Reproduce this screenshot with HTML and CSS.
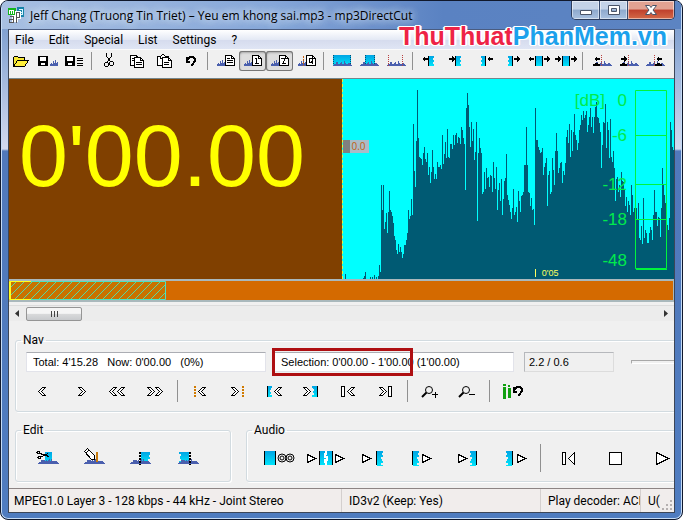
FILE: index.html
```html
<!DOCTYPE html>
<html lang="en">
<head>
<meta charset="utf-8">
<title>mp3DirectCut</title>
<link rel="stylesheet" href="styles.css">
</head>
<body>
<svg class="defs" aria-hidden="true">
  <defs>
    <linearGradient id="sky" x1="0" y1="0" x2="0" y2="1"><stop offset="0" stop-color="#00a4e4"/><stop offset="1" stop-color="#00e4fa"/></linearGradient>
    <pattern id="hatch" width="8" height="8" patternUnits="userSpaceOnUse"><path fill="none" stroke="#58d8a0" d="M-1 9L9-1M-1 1L1-1M7 9L9 7"/></pattern>
    <path id="wave" fill="#4a5fae" d="M0 6V4h1V3h1v1h1V1h1v2h1V0h1v3h1V2h1v4z"/>
    <path id="wide-wave" fill="#4a5fae" d="M0 5V4h1V3h2V1h2v2h2V2h1V1h1v2h2V0h1v2h1v1h2V2h2v1h1v1h1v1z"/>
    <g id="disk"><path fill="#000" d="M0 0h10v10H0z"/><path fill="#fff" d="M2 1h6v4H2zM3 7h4v2H3z"/></g>
    <g id="page"><path fill="#fff" stroke="#000" d="M.5.5h6l3 3v7h-9z"/><path fill="none" stroke="#000" d="M6.500.5v3h3"/></g>
    <path id="left" d="M0 3l3-3v2h3v2H3v2z"/>
    <path id="right" d="M6 3L3 0v2H0v2h3v2z"/>
    <path id="chev-l" fill="#fff" stroke="#000" d="M4.500.5l-4 4 4 4h3l-4-4 4-4z"/>
    <path id="chev-r" fill="#fff" stroke="#000" d="M.5.5h3l4 4-4 4h-3l4-4z"/>
    <path id="tri" fill="#fff" stroke="#000" d="M.5.500v8l8-4z"/>
    <path id="torn" fill="url(#sky)" d="M0 0h6v2H5v2h1v2H4v2h1v2h1v2H4v2h2v1H0z"/>
    <path id="undo" fill="none" stroke="#000" stroke-width="2" d="M1 6h4M2 1v5M2 5c1-5 8-5 8-1 0 2-2 4-4 6"/>
    <g id="lens" fill="none" stroke="#000"><circle cx="8" cy="4" r="3.500"/><path stroke-width="2" d="M5.500 6.500L1 11"/></g>
  </defs>
</svg>

<div class="window">
  <header class="titlebar">
    <svg class="logo" width="18" height="18" viewBox="0 0 18 18" shape-rendering="crispEdges" aria-hidden="true">
      <path fill="#12b51a" d="M0 1h8v7H0z"/><path fill="none" stroke="#fff" d="M1.500 7V3.500h2V7m0-3.500h2V7"/>
      <path fill="#1582a8" d="M9 0h7v10H9z"/><path fill="none" stroke="#d5f6ff" d="M11 2.500h3.500v5H11m1-2.500h2"/>
      <path fill="none" stroke="#fff" stroke-width="3" d="M5.500 14.500V8M8.500 15V5.500h3v5h-3"/>
      <path fill="none" stroke="#555" d="M8.500 16V5.500h3v5h-3M1.500 9.500h4v6h-4v-3h4"/>
    </svg>
    <h1>Jeff Chang (Truong Tin Triet) – Yeu em khong sai.mp3 - mp3DirectCut</h1>
    <div class="caption">
      <button aria-label="Minimize"><svg width="14" height="12"><path fill="#fff" stroke="#4a5468" d="M1.500 6.500h11v4h-11z"/></svg></button>
      <button aria-label="Maximize"><svg width="14" height="12"><path fill="#fff" stroke="#4a5468" fill-rule="evenodd" d="M1.500 1.500h11v9h-11zM4.500 4.500h5v3h-5z"/></svg></button>
      <button class="close" aria-label="Close"><svg width="14" height="12"><path fill="#fff" stroke="#4a5468" d="M1.500 1.500h4L7 3.500l1.500-2h4L9 6l3.500 4.500h-4L7 8.500l-1.500 2h-4L5 6z"/></svg></button>
    </div>
  </header>
  <div class="watermark"><span>ThuThuat</span><b>PhanMem.vn</b></div>

  <main class="client">
    <nav class="menu">
      <button>File</button><button>Edit</button><button>Special</button><button>List</button><button>Settings</button><button>?</button>
    </nav>

    <div class="toolbar" role="toolbar">
      <button aria-label="Open"><svg viewBox="0 0 27 20"><path fill="#f7e733" stroke="#000" d="M6.500 15.500v-9l1-1h3l1 1h6v3"/><path fill="#ffef3c" stroke="#000" d="M6.500 15.500l4-6h11l-4 6z"/></svg></button>
      <button aria-label="Save selection"><svg viewBox="0 0 27 20"><use href="#disk" x="4" y="5"/><use href="#wave" x="16" y="9"/></svg></button>
      <button aria-label="Save list"><svg viewBox="0 0 27 20"><use href="#disk" x="4" y="5"/><path stroke="#000" d="M16 7.500h6M16 9.500h6M16 12.500h6M16 14.500h6"/></svg></button>
      <i class="sep"></i>
      <button aria-label="Cut"><svg viewBox="0 0 27 20"><path fill="none" stroke="#000" d="M10.500 2v3l4 6M15.500 2v3l-4 6"/><circle cx="10.500" cy="13.500" r="2" fill="none" stroke="#000"/><circle cx="15.500" cy="12.500" r="2" fill="none" stroke="#000"/></svg></button>
      <button aria-label="Copy"><svg viewBox="0 0 27 20"><use href="#page" x="7" y="4"/><use href="#page" x="11" y="6"/><path stroke="#000" d="M9 7.500h2M9 9.500h2M13 11.500h6M13 13.500h6"/></svg></button>
      <button aria-label="Paste"><svg viewBox="0 0 27 20"><path fill="#fff" stroke="#000" d="M7.500 5.500h11v9h-11z"/><path fill="#fff" stroke="#000" d="M10.500 7.500v-2l2-2h1l2 2v2z"/><use href="#page" x="12" y="6"/><path stroke="#000" d="M14 11.500h5M14 13.500h5"/></svg></button>
      <button aria-label="Undo"><svg viewBox="0 0 27 20"><use href="#undo" x="8" y="5"/></svg></button>
      <i class="sep"></i>
      <button aria-label="Track list"><svg viewBox="0 0 27 20"><use href="#wave" x="5" y="9"/><use href="#page" x="13" y="4"/><path stroke="#000" d="M15 7.500h3M15 9.500h6M15 11.500h6"/></svg></button>
      <button class="on" aria-label="Buffer 1" aria-pressed="true"><svg viewBox="0 0 27 20"><use href="#wave" x="5" y="9"/><use href="#page" x="13" y="4"/><path fill="none" stroke="#000" d="M16 7.500h1.500V12M16 12.500h4"/></svg></button>
      <button class="on" aria-label="Buffer 2" aria-pressed="true"><svg viewBox="0 0 27 20"><use href="#wave" x="5" y="9"/><use href="#page" x="13" y="4"/><path fill="none" stroke="#000" d="M15 7.500h3.500v2l-2 3H20"/></svg></button>
      <button aria-label="Cue list"><svg viewBox="0 0 27 20"><use href="#wave" x="5" y="9"/><path stroke="#c86010" stroke-dasharray="2 1" d="M10.500 5v10"/><use href="#page" x="13" y="4"/><path fill="none" stroke="#000" d="M19.500 7.500h-3v4h3v-4M18 10.500l2 2"/></svg></button>
      <i class="sep"></i>
      <button aria-label="Select all"><svg viewBox="0 0 27 20"><path fill="url(#sky)" d="M5 4h18v11H5z"/><path stroke="#004c70" stroke-dasharray="1 1" d="M5.500 4v11M22.500 4v11"/><use href="#wide-wave" x="5" y="10"/></svg></button>
      <button aria-label="Select part"><svg viewBox="0 0 27 20"><path fill="url(#sky)" d="M10 4h10v11H10z"/><path stroke="#004c70" stroke-dasharray="1 1" d="M10.500 4v11M19.500 4v11"/><use href="#wide-wave" x="5" y="10"/></svg></button>
      <button aria-label="Deselect"><svg viewBox="0 0 27 20"><use href="#wide-wave" x="5" y="10"/><path stroke="#b84040" stroke-dasharray="1 1" d="M6.500 4v11M20.500 4v11"/></svg></button>
      <i class="sep"></i>
      <button aria-label="Start left"><svg viewBox="0 0 27 20"><use href="#left" x="5" y="5"/><path d="M11 5h1v10h-1z"/><path fill="url(#sky)" d="M12 5h5v2h-1v2h1v2h-1v2h1v2h-5z"/></svg></button>
      <button aria-label="Start right"><svg viewBox="0 0 27 20"><use href="#right" x="5" y="5"/><path d="M11 5h1v10h-1z"/><path fill="url(#sky)" d="M12 5h5v2h-1v2h1v2h-1v2h1v2h-5z"/></svg></button>
      <button aria-label="End left"><svg viewBox="0 0 27 20"><path fill="url(#sky)" d="M10 5h4v10h-4v-2h1v-2h-1V9h1V7h-1z"/><path d="M14 5h1v10h-1z"/><use href="#left" x="16" y="5"/></svg></button>
      <button aria-label="End right"><svg viewBox="0 0 27 20"><path fill="url(#sky)" d="M10 5h4v10h-4v-2h1v-2h-1V9h1V7h-1z"/><path d="M14 5h1v10h-1z"/><use href="#right" x="16" y="5"/></svg></button>
      <button aria-label="Expand"><svg viewBox="0 0 27 20"><use href="#left" x="3" y="5"/><path d="M10 5h8v10h-8z"/><path fill="url(#sky)" d="M11 5h6v10h-6z"/><use href="#right" x="19" y="5"/></svg></button>
      <button aria-label="Move selection"><svg viewBox="0 0 27 20"><use href="#right" x="3" y="5"/><path d="M10 5h8v10h-8z"/><path fill="url(#sky)" d="M11 5h6v10h-6z"/><use href="#right" x="19" y="5"/></svg></button>
      <i class="sep"></i>
      <button aria-label="Fade start"><svg viewBox="0 0 27 20"><use href="#wide-wave" x="6" y="10"/><use href="#left" x="7" y="5"/><path d="M6 15v-2h2v-1h3v1h2v2z"/><path stroke="#b84040" stroke-dasharray="1 1" d="M14.500 4v11"/></svg></button>
      <button aria-label="Fade middle"><svg viewBox="0 0 27 20"><use href="#wide-wave" x="6" y="10"/><use href="#right" x="7" y="5"/><path d="M6 15v-2h2v-1h3v1h2v2z"/><path stroke="#b84040" stroke-dasharray="1 1" d="M14.500 4v11"/></svg></button>
      <button aria-label="Fade end"><svg viewBox="0 0 27 20"><use href="#wide-wave" x="5" y="10"/><use href="#left" x="15" y="5"/><path d="M14 15v-2h2v-1h3v1h2v2z"/><path stroke="#b84040" stroke-dasharray="1 1" d="M13.500 4v11"/></svg></button>
    </div>

    <section class="display">
      <div class="clock">0'00.00</div>
      <div class="graph">
        <svg class="peaks" viewBox="0 0 332 200" preserveAspectRatio="none" aria-hidden="true"><path id="peak-path" fill="#005a73"/></svg>
        <span class="gain">0.0</span>
        <span class="tick">0'05</span>
        <svg class="meter" width="72" height="200" viewBox="0 0 72 200" aria-hidden="true">
          <path fill="none" stroke="#00f43c" d="M33.500 11.500h31v178h-31zM33 56.500h32M33 105.500h32M33 140.500h32M34 190.500h31"/>
          <text x="3" y="27" text-anchor="end">[dB]</text>
          <text x="25" y="27" text-anchor="end">0</text>
          <text x="25" y="62" text-anchor="end">-6</text>
          <text x="25" y="111" text-anchor="end">-12</text>
          <text x="25" y="146" text-anchor="end">-18</text>
          <text x="25" y="187" text-anchor="end">-48</text>
        </svg>
      </div>
    </section>
    <div class="overview">
      <svg class="range" width="157" height="19" aria-hidden="true">
        <rect width="157" height="19" fill="#c97200"/><rect width="157" height="19" fill="url(#hatch)"/>
        <path fill="none" stroke="#50e0c0" d="M1 .5h155.500v18H1"/>
        <path fill="none" stroke="#ffff20" d="M22 .5H.5v18H22M1.500 1v17"/>
      </svg>
    </div>
    <div class="scroller">
      <button aria-label="Scroll left"><svg width="6" height="8"><path d="M5 0v7L1 3.500z" fill="#333"/></svg></button>
      <div class="thumb"><i></i><i></i><i></i></div>
      <button class="end" aria-label="Scroll right"><svg width="6" height="8"><path d="M1 0v7l4-3.500z" fill="#333"/></svg></button>
    </div>

    <fieldset class="group nav">
      <legend>Nav</legend>
      <div class="fields">
        <input class="total" aria-label="Position" readonly value="Total: 4'15.28   Now: 0'00.00   (0%)">
        <div class="selection"><input aria-label="Selection" readonly value="Selection: 0'00.00 - 1'00.00 (1'00.00)"><div class="mark"></div></div>
        <input class="level" aria-label="Level" readonly value="2.2 / 0.6">
        <div class="track"></div>
      </div>
      <div class="buttons">
        <button aria-label="Back"><svg viewBox="0 0 37 22"><use href="#chev-l" x="12" y="7"/></svg></button>
        <button aria-label="Forward"><svg viewBox="0 0 37 22"><use href="#chev-r" x="15" y="7"/></svg></button>
        <button aria-label="Fast back"><svg viewBox="0 0 37 22"><use href="#chev-l" x="9" y="7"/><use href="#chev-l" x="17" y="7"/></svg></button>
        <button aria-label="Fast forward"><svg viewBox="0 0 37 22"><use href="#chev-r" x="10" y="7"/><use href="#chev-r" x="18" y="7"/></svg></button>
        <i class="sep"></i>
        <button aria-label="Previous cue"><svg viewBox="0 0 37 22"><path stroke="#d07a00" stroke-width="2" stroke-dasharray="2 1" d="M13 6v11"/><use href="#chev-l" x="16" y="7"/></svg></button>
        <button aria-label="Next cue"><svg viewBox="0 0 37 22"><use href="#chev-r" x="12" y="7"/><path stroke="#d07a00" stroke-width="2" stroke-dasharray="2 1" d="M24 6v11"/></svg></button>
        <button aria-label="Selection start"><svg viewBox="0 0 37 22"><path d="M11 6h1v11h-1z"/><path fill="url(#sky)" d="M12 6h4v2h-1v2h-1v2h1v2h-1v1h2v2h-4z"/><use href="#chev-l" x="18" y="7"/></svg></button>
        <button aria-label="Selection end"><svg viewBox="0 0 37 22"><use href="#chev-r" x="10" y="7"/><path fill="url(#sky)" d="M19 6h5v11h-5v-2h2v-2h-1v-2h1V9h-1V8h-1z"/><path d="M24 6h1v11h-1z"/></svg></button>
        <button aria-label="To start"><svg viewBox="0 0 37 22"><path fill="#fff" stroke="#000" d="M11.500 6.500h3v10h-3z"/><use href="#chev-l" x="17" y="7"/></svg></button>
        <button aria-label="To end"><svg viewBox="0 0 37 22"><use href="#chev-r" x="12" y="7"/><path fill="#fff" stroke="#000" d="M21.500 6.500h3v10h-3z"/></svg></button>
        <i class="sep"></i>
        <button aria-label="Zoom in"><svg class="smooth" viewBox="0 0 37 22"><use href="#lens" x="9" y="6"/><path stroke="#000" d="M20 14.500h6M23.500 12v6"/></svg></button>
        <button aria-label="Zoom out"><svg class="smooth" viewBox="0 0 37 22"><use href="#lens" x="9" y="6"/><path stroke="#000" d="M20 14.500h6"/></svg></button>
        <i class="sep"></i>
        <button aria-label="Reset meter"><svg viewBox="0 0 37 22"><path fill="#10a010" d="M9 4h3v2H9zM9 7h3v12H9zM14 5h2v2h-2zM14 8h3v10h-3z"/><use href="#undo" x="18" y="6"/></svg></button>
      </div>
    </fieldset>

    <div class="groups">
      <fieldset class="group edit">
        <legend>Edit</legend>
        <div class="buttons">
          <button aria-label="Cut out"><svg viewBox="0 0 47 24"><path fill="url(#sky)" d="M21 5h7v12h-7z"/><use href="#wide-wave" x="14" y="12"/><use href="#wide-wave" x="16" y="12"/><path fill="none" stroke="#000" d="M16 6.500l9 3M16 10.500l8-4"/><circle cx="14.500" cy="5.500" r="1.500" fill="#fff" stroke="#000"/><circle cx="15.500" cy="10.500" r="1.500" fill="#fff" stroke="#000"/></svg></button>
          <button aria-label="Edit cue"><svg viewBox="0 0 47 24"><use href="#wide-wave" x="13" y="12"/><use href="#wide-wave" x="15" y="12"/><path fill="#c87c10" d="M25 5h2v10h-2z"/><path fill="#fff" stroke="#000" d="M13.500 4.500l3-3 7 7v4h-3z"/><path stroke="#000" d="M15 6l3-3"/></svg></button>
          <button aria-label="Set begin"><svg viewBox="0 0 47 24"><path fill="url(#sky)" d="M23 5h9v3h-1v2h1v2h-2v3h2v1h-9z"/><use href="#wide-wave" x="12" y="12"/><use href="#wide-wave" x="14" y="12"/><path stroke="#000" stroke-width="2" stroke-dasharray="2 1" d="M22 5v13"/></svg></button>
          <button aria-label="Set end"><svg viewBox="0 0 47 24"><path fill="url(#sky)" d="M14 5h10v11H14v-2h2v-2h-1V9h1V7h-2z"/><use href="#wide-wave" x="13" y="12"/><use href="#wide-wave" x="15" y="12"/><path stroke="#000" stroke-width="2" stroke-dasharray="2 1" d="M25 5v13"/></svg></button>
        </div>
      </fieldset>
      <fieldset class="group audio">
        <legend>Audio</legend>
        <div class="buttons">
          <button aria-label="Play loop"><svg viewBox="0 0 47 24"><path d="M9 4h12v14H9z"/><path fill="url(#sky)" d="M10 4h10v14H10z"/><g class="smooth" fill="none" stroke="#000"><circle cx="27" cy="11" r="4"/><circle cx="35" cy="11" r="4"/><circle cx="27" cy="11" r="2"/><circle cx="35" cy="11" r="2"/></g></svg></button>
          <button aria-label="Play over cut"><svg viewBox="0 0 47 24"><use href="#tri" x="5" y="7"/><path d="M17 4h14v14H17z"/><path fill="url(#sky)" d="M18 4h12v14H18z"/><path fill="none" stroke="#fff" stroke-width="2" d="M24 4v3h-1v3h2v3h-2v2h1v3"/><use href="#tri" x="33" y="7"/></svg></button>
          <button aria-label="Play to start"><svg viewBox="0 0 47 24"><use href="#tri" x="13" y="7"/><path d="M27 4h1v14h-1z"/><use href="#torn" x="28" y="4"/></svg></button>
          <button aria-label="Play from start"><svg viewBox="0 0 47 24"><path d="M16 4h1v14h-1z"/><use href="#torn" x="17" y="4"/><use href="#tri" x="26" y="7"/></svg></button>
          <button aria-label="Play to end"><svg viewBox="0 0 47 24"><use href="#tri" x="15" y="7"/><use href="#torn" x="-33" y="4" transform="scale(-1 1)"/><path d="M33 4h1v14h-1z"/></svg></button>
          <button aria-label="Play from end"><svg viewBox="0 0 47 24"><use href="#torn" x="-22" y="4" transform="scale(-1 1)"/><path d="M22 4h1v14h-1z"/><use href="#tri" x="27" y="7"/></svg></button>
          <i class="sep"></i>
          <button aria-label="Rewind"><svg viewBox="0 0 47 24"><path fill="#fff" stroke="#000" d="M17.500 5.500h3v12h-3zM29.500 5.500v12l-6-6z"/></svg></button>
          <button aria-label="Stop"><svg viewBox="0 0 47 24"><path fill="#fff" stroke="#000" d="M17.500 5.500h12v12h-12z"/></svg></button>
          <button aria-label="Play"><svg viewBox="0 0 47 24"><path fill="#fff" stroke="#000" d="M17.500 5.500v12l12-6z"/></svg></button>
        </div>
      </fieldset>
    </div>

    <footer class="status">
      <span class="format">MPEG1.0 Layer 3 - 128 kbps - 44 kHz - Joint Stereo</span>
      <span class="tag">ID3v2 (Keep: Yes)</span>
      <span class="decoder">Play decoder: ACI</span>
      <span class="unit">U(</span>
      <svg class="grip" width="12" height="12" aria-hidden="true"><path fill="#b5b0b0" d="M8 0h2v2H8zM4 4h2v2H4zM8 4h2v2H8zM0 8h2v2H0zM4 8h2v2H4zM8 8h2v2H8z"/></svg>
    </footer>
  </main>
</div>
<script src="script.js"></script>
</body>
</html>
```
FILE: styles.css
```css
* { box-sizing: border-box; }
body { margin: 0; font: 12px/16px Roboto, "Open Sans", sans-serif; color: #000; background: #fff; }
button { border: 0; padding: 0; margin: 0; background: none; font: inherit; color: inherit; }
svg { display: block; }
.defs { position: absolute; width: 0; height: 0; }

.window {
  position: relative;
  min-height: 100vh;
  padding: 0 7px 6px;
  border: 1px solid #10182c;
  border-radius: 8px;
  box-shadow: inset 0 0 0 1px #c6dcf6;
  background: linear-gradient(#7195cb 0, #8fabd6 50px, #d3daef 148px, #5179bb 150px, #4f7cc0 100%);
  overflow: hidden;
}
.titlebar {
  display: flex;
  align-items: flex-start;
  height: 28px;
  margin: 0 -6px;
  padding-left: 6px;
  background: linear-gradient(90deg, #a8c0e2, #86a7d9 40%, #5a82c2 65%, #5c84c2);
}
.logo { margin-top: 6px; }
h1 {
  flex: 1;
  margin: 6px 0 0 4px;
  font: 12px/17px "Open Sans", sans-serif;
  white-space: nowrap;
  text-shadow: 0 0 8px #e8f1ff, 0 0 8px #dce9fb;
}
.caption { display: flex; border: 1px solid #2c3c5c; border-top: 0; border-radius: 0 0 5px 5px; margin-right: 6px; overflow: hidden; }
.caption button {
  display: grid;
  place-items: center;
  width: 28px;
  height: 18px;
  border-right: 1px solid #384c70;
  box-shadow: inset 0 0 0 1px #ffffff80;
  background: linear-gradient(#c4d3e8 45%, #8ea9cd 50%, #a9c1e0);
}
.caption .close { width: 46px; border: 0; background: linear-gradient(#e2a292 45%, #c0402c 50%, #d46a48); }
.watermark {
  position: absolute;
  top: 18px;
  right: 15px;
  font: bold 25px/34px "Liberation Sans Narrow", "Liberation Sans", sans-serif;
  color: #ee2346;
  text-shadow: 1px 1px 0 #fff, -1px 1px 0 #fff, 1px -1px 0 #fff, -1px -1px 0 #fff, 2px 0 0 #fff, -2px 0 0 #fff;
}
.watermark b { color: #1ba1ec; }

.client {
  display: flex;
  flex-direction: column;
  border: 1px solid #3c4658;
  border-top-color: #4a5c80;
  background: #f0f0f0;
  overflow: hidden;
}
.menu { display: flex; height: 19px; padding-left: 6px; gap: 15px; background: linear-gradient(#fff, #e4e9f5 50%, #d6dcee 55%, #dfe5f4); }
.menu button { line-height: 20px; }
.toolbar { display: flex; height: 29px; padding-top: 1px; margin-left: -2px; border-top: 1px solid #fafafa; }
.toolbar button { flex: none; width: 27px; height: 20px; }
.toolbar .on { border-radius: 3px; background: #dedede; box-shadow: inset 0 0 0 1px #777, inset 1px 2px 2px #aaa; }
.toolbar svg { width: 27px; height: 20px; shape-rendering: crispEdges; }
.sep { flex: none; width: 1px; height: 18px; margin: 1px 4px 0 3px; background: #909090; }

.display { display: grid; grid-template-columns: 1fr 1fr; height: 201px; border-top: 1px solid #75868c; }
.clock { padding: 28px 0 0 10px; font: 88px/98px "Liberation Sans", Arial, sans-serif; color: #ff0; background: #804000; overflow: hidden; }
.graph { position: relative; background: #0ff; overflow: hidden; border-left: 1px dashed #e8f040; }
.peaks { width: 100%; height: 200px; shape-rendering: crispEdges; }
.gain { position: absolute; top: 61px; left: 0; padding: 0 3px 0 2px; border-left: 7px solid #808080; font: 10px/13px "Open Sans", sans-serif; color: #c06010; background: #a9bcc8; }
.tick { position: absolute; left: 58%; bottom: 1px; padding-left: 7px; font: 9px/10px "Liberation Sans", sans-serif; color: #ffff60; }
.tick::before { content: ""; position: absolute; left: 0; top: 1px; width: 1px; height: 8px; background: #ffff60; }
.meter { position: absolute; top: 0; right: 0; overflow: visible; font: 17px "Liberation Sans", sans-serif; }
.meter text { fill: #00ea4c; }
.overview { height: 23px; border: solid #a9b8bc; border-width: 2px 1px 2px 0; background: #d46a00; }
.scroller { display: flex; align-items: center; height: 16px; margin-top: 3px; padding: 0 5px; background: #ececec; border-top: 1px solid #dcdcdc; }
.thumb { display: flex; justify-content: center; align-items: center; gap: 2px; width: 56px; height: 14px; margin-left: 6px; border: 1px solid #959595; border-radius: 2px; background: linear-gradient(#f5f5f5 45%, #d9dadb 50%, #c8cacd); }
.thumb i { width: 1px; height: 6px; background: #444; }
.scroller .end { margin-left: auto; }

.group { min-width: 0; margin: 0; padding: 0 8px; border: 1px solid #d2dbe0; border-radius: 3px; box-shadow: inset 1px 1px 0 #fff, 1px 1px 0 #fff; }
legend { height: 16px; padding: 0 2px; margin-left: -3px; line-height: 16px; }
.nav { height: 80px; margin: 11px -12px 0 6px; padding-left: 10px; }
.nav legend { margin-left: -5px; }
.fields { display: flex; align-items: center; height: 20px; margin-top: 4px; }
input {
  width: 100%;
  height: 20px;
  padding: 0 6px;
  border: 1px solid #e2e3ea;
  border-top-color: #abadb3;
  background: #fff;
  font: 11px/16px "Liberation Sans", sans-serif;
  color: #000;
}
.fields .total { width: 240px; }
.selection { position: relative; width: 242px; margin-left: 6px; }
.selection input { padding-left: 8px; }
.mark { position: absolute; inset: -4px auto -4px 0; width: 141px; border: 3px solid #ae0f12; }
.fields .level { width: 90px; margin-left: 10px; padding: 0 4px; background: #f0f0f0; border-color: #b6b8bc #dcdcdc #dcdcdc #b6b8bc; }
.track { flex: 1; height: 4px; margin-left: 17px; border: 1px solid #a8a8a8; border-bottom-color: #fff; border-right: 0; }
.buttons { display: flex; }
.buttons svg { shape-rendering: crispEdges; }
.buttons .smooth { shape-rendering: auto; }
.nav .buttons { margin-top: 8px; }
.nav .buttons button, .nav .buttons svg { width: 37px; height: 22px; }
.nav .sep { height: 22px; margin-top: 0; }

.groups { display: flex; gap: 15px; margin: 10px -12px 0 6px; }
.groups .group { height: 60px; }
.edit { flex: none; width: 216px; }
.audio { flex: 1; }
.groups .buttons { margin-top: 9px; }
.groups .buttons button, .groups .buttons svg { width: 47px; height: 24px; }
.groups .sep { height: 28px; margin-top: -3px; }

.status { position: relative; display: flex; height: 24px; margin-top: 6px; border-top: 1px solid #8c8484; background: #f1edec; line-height: 24px; white-space: nowrap; }
.status span { overflow: hidden; padding-left: 7px; border-left: 1px solid #d4cfce; }
.status .format { flex: 1; padding-left: 5px; border: 0; }
.tag { width: 199px; }
.decoder { width: 100px; }
.unit { width: 34px; }
.grip { position: absolute; right: 0; bottom: 0; }
```
FILE: script.js
```js
// Top edge of each one-pixel column, in thirds of a pixel (612 is silence).
const tops = [
  612,597,612,612,612,612,612,612,612,612,612,612,612,612,612,612,612,612,612,
  609,604,592,612,612,612,612,606,612,607,612,600,612,605,612,603,570,590,
  330,405,330,462,440,415,474,410,348,405,412,424,445,483,495,524,537,507,530,515,530,549,537,510,510,495,474,
  405,433,424,372,420,147,288,337,198,45,189,246,250,252,270,234,216,252,262,234,300,276,324,290,225,276,312,298,312,
  262,276,276,270,282,180,267,238,200,250,162,246,248,207,207,222,180,210,180,174,204,186,190,207,156,165,190,207,
  345,99,54,90,156,216,141,198,162,255,230,141,438,234,189,219,234,357,350,291,342,279,310,305,336,300,303,350,
  261,310,342,276,405,345,325,378,312,420,372,318,310,237,360,375,390,410,
  432,400,343,420,412,395,440,348,378,410,363,360,350,270,270,156,270,350,355,393,368,405,402,450,
  99,195,195,215,225,235,230,219,300,276,265,249,393,300,288,357,350,249,285,330,228,175,228,294,280,265,261,325,288,300,
  265,186,165,204,147,246,165,228,170,117,180,195,225,204,165,150,120,135,108,130,120,108,170,150,126,99,155,126,175,
  126,95,81,126,130,145,170,279,210,140,145,87,220,140,165,248,132,245,260,228,280,378,312,305,350,330,365,
  291,318,320,345,392,365,410,378,390,420,330,360,410,400,415,400,432,385,490,495,453,507,369,490,465,475,503,503,
  475,456,465,495,420,345,411,412,453,425,430,486,400,279,330,360,385,430,450,465,430,141,165,216,225,225
];

let d = "M1 200";
for (const top of tops) d += `V${Math.round(top / 3 - 4)}h1`;
document.getElementById("peak-path").setAttribute("d", d + "V200z");
```
